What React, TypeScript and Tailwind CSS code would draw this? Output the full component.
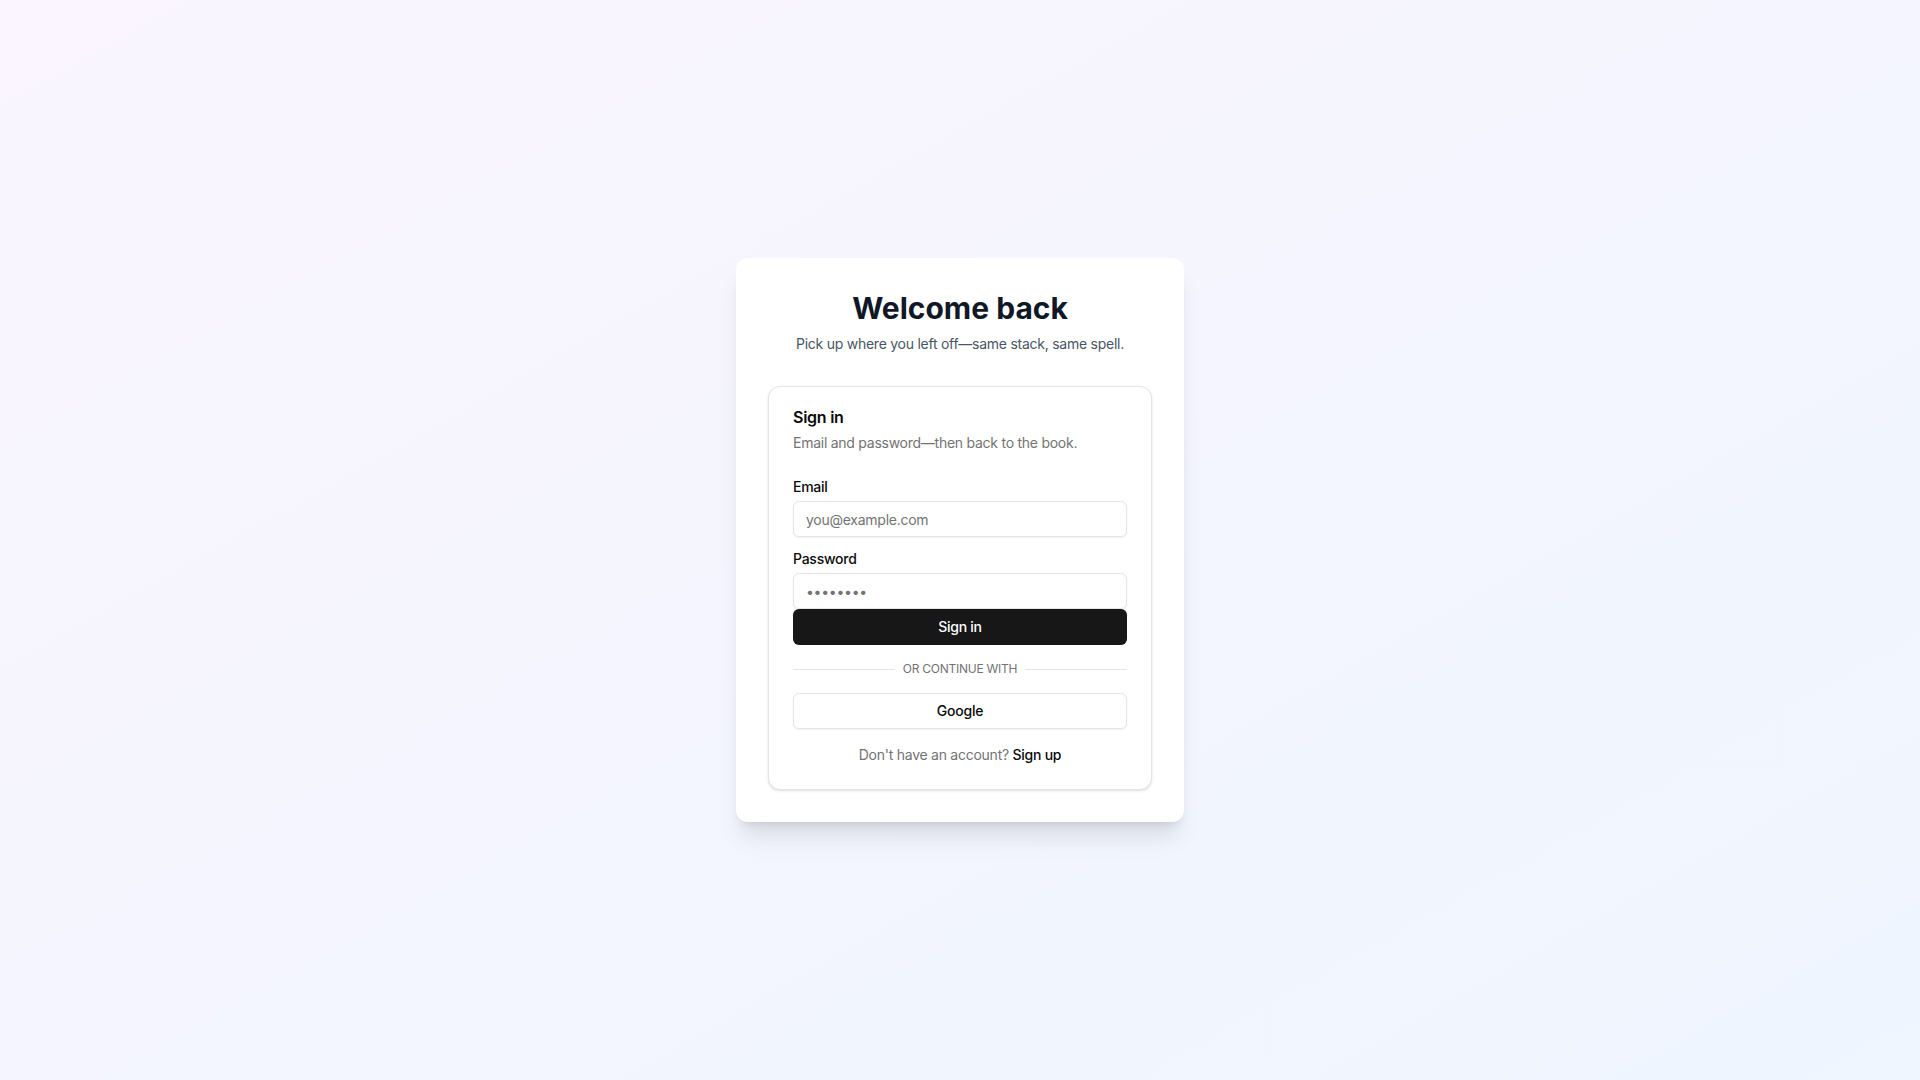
import { useState } from 'react'

function Field({ id, label, type, placeholder, value, onChange }: {
  id: string
  label: string
  type: string
  placeholder?: string
  value: string
  onChange: (v: string) => void
}) {
  return (
    <div className="flex flex-col gap-1">
      <label htmlFor={id} className="text-sm leading-5 font-medium text-neutral-950">
        {label}
      </label>
      <input
        id={id}
        type={type}
        placeholder={placeholder}
        value={value}
        onChange={(e) => onChange(e.target.value)}
        className="h-9 w-full rounded-md border border-[#e5e5e5] bg-white px-3 text-sm text-neutral-950 shadow-xs outline-none placeholder:text-neutral-500"
      />
    </div>
  )
}

export default function App() {
  const [email, setEmail] = useState('')
  const [password, setPassword] = useState('')

  return (
    <div
      className="flex min-h-screen w-full items-center justify-center bg-gradient-to-br from-purple-50 to-blue-50 tracking-[-0.016em]"
      style={{ fontFamily: 'Inter, "Noto Sans", sans-serif' }}
    >
      <div className="w-full max-w-md rounded-xl bg-white p-8 shadow-xl">
        <div className="text-center">
          <h1 className="text-3xl font-bold tracking-normal text-gray-900">Welcome back</h1>
          <p className="mt-2 text-sm text-gray-600">Pick up where you left off—same stack, same spell.</p>
        </div>

        <div className="mt-8 flex flex-col gap-6 rounded-xl border border-[#e5e5e5] bg-white py-6 shadow-sm">
          <div className="flex flex-col gap-1.5 px-6">
            <div className="-mt-0.5 leading-none font-semibold text-neutral-950">Sign in</div>
            <div className="mt-0.5 text-sm text-neutral-500">Email and password—then back to the book.</div>
          </div>

          <div className="flex flex-col gap-4 px-6">
            <form onSubmit={(e) => e.preventDefault()}>
              <div className="flex flex-col gap-3">
                <Field id="email" label="Email" type="email" placeholder="you@example.com" value={email} onChange={setEmail} />
                <Field id="password" label="Password" type="password" placeholder="••••••••" value={password} onChange={setPassword} />
              </div>
              <button
                type="submit"
                className="h-9 w-full rounded-md bg-neutral-900 text-sm font-medium text-white"
              >
                Sign in
              </button>
            </form>

            <div className="flex items-center gap-2">
              <div className="h-px flex-1 bg-[#e5e5e5]" />
              <span className="text-xs text-neutral-500 uppercase">Or continue with</span>
              <div className="h-px flex-1 bg-[#e5e5e5]" />
            </div>

            <button
              type="button"
              className="h-9 w-full rounded-md border border-[#e5e5e5] bg-white text-sm font-medium text-neutral-950 shadow-xs"
            >
              Google
            </button>

            <p className="text-center text-sm text-neutral-500">
              Don't have an account? <a href="#" className="font-medium text-neutral-950">Sign up</a>
            </p>
          </div>
        </div>
      </div>
    </div>
  )
}
